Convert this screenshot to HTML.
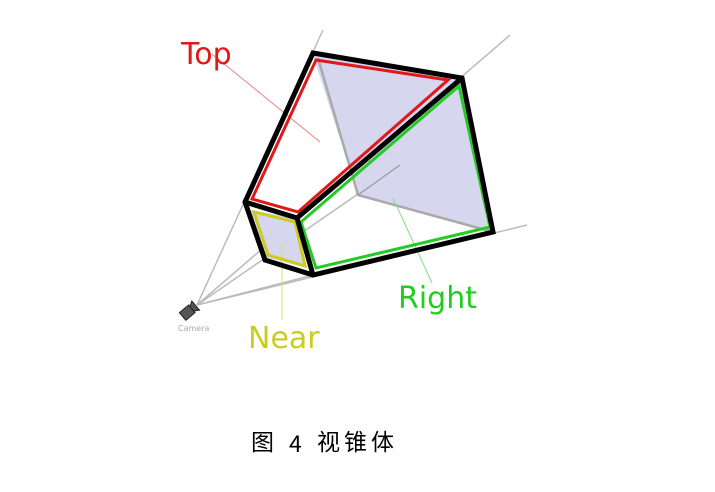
<!DOCTYPE html>
<html><head><meta charset="utf-8"><style>
html,body{margin:0;padding:0;background:#fff;width:715px;height:492px;overflow:hidden}
.cap{position:absolute;top:430px;height:24px;line-height:24px;font-size:23px;font-family:"Liberation Sans","Noto Sans CJK SC",sans-serif;color:#000;white-space:nowrap}
</style></head><body>
<svg width="715" height="492" style="position:absolute;left:0;top:0" font-family="DejaVu Sans, sans-serif">
<g stroke="#bbb" stroke-width="1.5" fill="none">
<line x1="197" y1="305" x2="323" y2="30"/>
<line x1="197" y1="305" x2="510" y2="35"/>
<line x1="197" y1="305" x2="527" y2="225"/>
<line x1="197" y1="305" x2="313" y2="275"/>
<line x1="197" y1="305" x2="400" y2="165"/>
</g>
<polygon points="313,55 462,78 493,232 358,195" fill="#d6d6ef"/>
<polyline points="318,58 358,195 493,232" stroke="#aaa" stroke-width="2.5" fill="none"/>
<line x1="358" y1="195" x2="400" y2="165" stroke="#999" stroke-width="1.2"/>
<polygon points="250,210 297,218 307,268 265,257" fill="#d6d6ef"/>
<line x1="212" y1="54" x2="320" y2="142" stroke="#f08080" stroke-width="1"/>
<line x1="393" y1="198" x2="432" y2="283" stroke="#80e080" stroke-width="1"/>
<line x1="282" y1="242" x2="282" y2="320" stroke="#e0e060" stroke-width="1"/>
<polygon points="316,60 448,80 298,212 252,199" stroke="#e01818" stroke-width="3" fill="none"/>
<polygon points="459,86 490,227 316,268 301,222" stroke="#22cc22" stroke-width="3" fill="none"/>
<polygon points="254,212 295,222 305,266 268,255" stroke="#cccc20" stroke-width="3" fill="none"/>
<polygon points="313,53 462,78 493,232 313,275 265,260 245,202" stroke="#000" stroke-width="5" fill="none" stroke-linejoin="miter"/>
<line x1="462" y1="78" x2="297" y2="218" stroke="#000" stroke-width="5"/>
<polyline points="245,202 297,218 313,275" stroke="#000" stroke-width="5" fill="none"/>
<g transform="translate(188,312) rotate(-40)"><rect x="-7" y="-5" width="12" height="10" fill="#555" stroke="#222"/><polygon points="5,-3 10,-6 10,6 5,3" fill="#555" stroke="#222"/></g>
<text x="178" y="331" font-size="8" fill="#aaa">Camera</text>
<text x="181" y="64" font-size="30" fill="#e01818">Top</text>
<text x="248" y="348" font-size="30" fill="#cccc20">Near</text>
<text x="398" y="308" font-size="30" fill="#22cc22">Right</text>
</svg>
<div class="cap" style="left:251px">图</div>
<div class="cap" style="left:289px;font-family:'Noto Sans CJK SC',sans-serif">4</div>
<div class="cap" style="left:317px;letter-spacing:4px">视锥体</div>
</body></html>
